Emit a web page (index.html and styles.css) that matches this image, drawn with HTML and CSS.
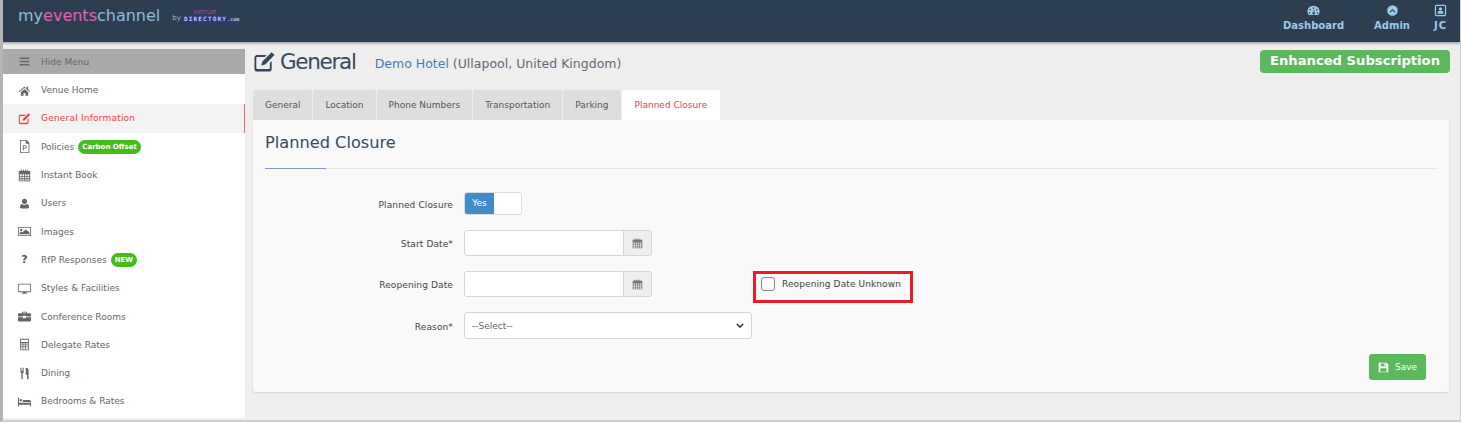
FILE: index.html
```html
<!DOCTYPE html>
<html>
  <head>
    <title>Planned Closure</title>
    <link rel="stylesheet" href="styles.css">
    <meta charset="utf-8">
  </head>
  <body>
    <div id="header">
      <div class="logo">
        <span class="logo-main">my<b>events</b>channel</span>
        <span class="logo-by">by</span>
        <span class="logo-vd"><span class="logo-venue">venue</span><span class="logo-dir">DIRECTORY<small>.com</small></span></span>
      </div>
      <div class="top-nav">
        <a class="top-link">
          <svg class="top-icon" viewBox="0 0 16 16"><path fill-rule="evenodd" d="M8 2a7.5 7 0 0 0-7.5 7c0 1.800.6 3.300 1.500 4.500h12c.9-1.200 1.500-2.700 1.500-4.500A7.500 7 0 0 0 8 2zM4 6a1 1 0 1 1 0 2 1 1 0 0 1 0-2zm4-2a1 1 0 1 1 0 2 1 1 0 0 1 0-2zm4 2a1 1 0 1 1 0 2 1 1 0 0 1 0-2zM3 10a1 1 0 1 1 0 2 1 1 0 0 1 0-2zm10 0a1 1 0 1 1 0 2 1 1 0 0 1 0-2zM9.500 6l-.5 4.200a1.500 1.500 0 1 1-1.500-.1z"/></svg>
          Dashboard
        </a>
        <a class="top-link">
          <svg class="top-icon" viewBox="0 0 16 16"><path fill-rule="evenodd" d="M8 1.500a6.500 6.500 0 1 0 0 13 6.500 6.500 0 0 0 0-13zM8 6l3.500 3.500-1 1L8 8 5.500 10.500l-1-1z"/></svg>
          Admin
        </a>
        <a class="top-link">
          <svg class="top-icon" viewBox="0 0 16 16"><path fill-rule="evenodd" d="M3 1h10a2 2 0 0 1 2 2v10a2 2 0 0 1-2 2H3a2 2 0 0 1-2-2V3a2 2 0 0 1 2-2zm0 1.500a.5.5 0 0 0-.5.5v10a.5.5 0 0 0 .5.5h10a.5.5 0 0 0 .5-.5V3a.5.5 0 0 0-.5-.5zM8 4a2 2 0 1 1 0 4 2 2 0 0 1 0-4zM4.500 12V10c0-1 1-1.500 2-1.500h3c1 0 2 .5 2 1.500v2z"/></svg>
          JC
        </a>
      </div>
    </div>

    <div id="content-container">
      <div id="sidebar">
        <div class="hide-menu">
          <svg class="nav-icon" viewBox="0 0 16 16"><path d="M2 3h12v2H2zM2 7h12v2H2zM2 11h12v2H2z"/></svg>
          Hide Menu
        </div>
        <a class="nav-item">
          <svg class="nav-icon" viewBox="0 0 16 16"><path d="M8 3 1 9l.7.8L8 4.500l6.300 5.300.7-.8-2.500-2.100V3.500h-2v2.500zM3.500 10v4.500h3.200V11h2.600v3.500h3.200V10L8 6z"/></svg>
          Venue Home
        </a>
        <a class="nav-item active">
          <svg class="nav-icon" viewBox="0 0 16 16"><path d="M2.500 3.500h7l-1.300 1.300H3a.7.7 0 0 0-.7.7v7a.7.7 0 0 0 .7.7h8a.7.7 0 0 0 .7-.7V9l1.300-1.300V13a2 2 0 0 1-2 2H3a2 2 0 0 1-2-2V5.500a2 2 0 0 1 1.500-2zM13 1.500l2 2-6.500 6.500-2.800.8.800-2.800z"/></svg>
          General Information
        </a>
        <a class="nav-item">
          <svg class="nav-icon" viewBox="0 0 16 16"><path fill-rule="evenodd" d="M2.500 0h8l3.500 3.500V16H2.500zm1 1v14h9.500V4.500H9.500V1zM6 6.500h2.700a2 2 0 0 1 0 4H7V13H6zM7 7.500v2h1.700a1 1 0 0 0 0-2z"/></svg>
          Policies
          <span class="pill">Carbon Offset</span>
        </a>
        <a class="nav-item">
          <svg class="nav-icon" viewBox="0 0 16 16"><path fill-rule="evenodd" d="M3.500 1h1.500v1.500h1V1h1.500v1.500h1V1h1.500v1.500h1V1h1v1.500H15V15H1V2.500h2.500zM2.200 6.500v2h2.300v-2zm3.300 0v2h2v-2zm3 0v2h2v-2zm3 0v2h2.300v-2zm-9.300 3v2h2.300v-2zm3.300 0v2h2v-2zm3 0v2h2v-2zm3 0v2h2.300v-2zm-9.300 3V14h2.300v-1.500zm3.300 0V14h2v-1.500zm3 0V14h2v-1.500zm3 0V14h2.300v-1.500z"/></svg>
          Instant Book
        </a>
        <a class="nav-item">
          <svg class="nav-icon" viewBox="0 0 16 16"><path d="M8 2a3.200 3.200 0 0 1 3.200 3.300c0 1.800-1.400 3.500-3.200 3.500S4.800 7.100 4.800 5.300A3.200 3.200 0 0 1 8 2zM5 8.500c.8.700 1.800 1.200 3 1.200s2.200-.5 3-1.200c1.500.2 2.500 1.500 2.500 3.500v1c0 .8-.6 1-1.500 1H4c-.9 0-1.500-.2-1.500-1v-1c0-2 1-3.300 2.500-3.500z"/></svg>
          Users
        </a>
        <a class="nav-item">
          <svg class="nav-icon" viewBox="0 0 16 16"><path fill-rule="evenodd" d="M0 2.500h16v11H0zm1 1v9h14v-9zM4 4.500a1.500 1.500 0 1 1 0 3 1.500 1.500 0 0 1 0-3zM2 11.500V9.500l2-1.500 1.500 1 4-3.500 4.500 3.500v2.500z"/></svg>
          Images
        </a>
        <a class="nav-item">
          <span class="nav-icon nav-glyph">?</span>
          RfP Responses
          <span class="pill">NEW</span>
        </a>
        <a class="nav-item">
          <svg class="nav-icon" viewBox="0 0 16 16"><path fill-rule="evenodd" d="M1.500 2h13A1.500 1.500 0 0 1 16 3.500v7.500a1.500 1.500 0 0 1-1.500 1.500H10v1.200h1.500v.8h-7v-.8H6v-1.200H1.500A1.500 1.500 0 0 1 0 11V3.500A1.500 1.500 0 0 1 1.500 2zm0 1a.5.5 0 0 0-.5.500V11a.5.5 0 0 0 .5.5h13a.5.5 0 0 0 .5-.5V3.500a.5.5 0 0 0-.5-.5z"/></svg>
          Styles &amp; Facilities
        </a>
        <a class="nav-item">
          <svg class="nav-icon" viewBox="0 0 16 16"><path d="M5 4V2.500C5 2 5.400 2 6 2h4c.6 0 1 0 1 .5V4h3.500c.8 0 1.500.6 1.500 1.500V8H10V7H6v1H0V5.500C0 4.600.7 4 1.500 4zm1 0h4V3H6zM0 9h6v1h4V9h6v3.500c0 .9-.7 1.500-1.500 1.500h-13C.7 14 0 13.400 0 12.500z"/></svg>
          Conference Rooms
        </a>
        <a class="nav-item">
          <svg class="nav-icon" viewBox="0 0 16 16"><path fill-rule="evenodd" d="M2.500 1h11v14h-11zm1 1v3h9V2zm0 4.500V8h2V6.500zm3 0V8h2V6.500zm3 0V8h3V6.500zm-6 2.500v1.500h2V9zm3 0v1.500h2V9zm3 0v1.500h3V9zm-6 2.500V14h2v-2.500zm3 0V14h2v-2.500zm3 0V14h3v-2.500z"/></svg>
          Delegate Rates
        </a>
        <a class="nav-item">
          <svg class="nav-icon" viewBox="0 0 16 16"><path d="M3 1h.8v4h.7V1h1v4h.7V1H7v5.500L5.800 8v7H4.200V8L3 6.500zM9.500 1C11.500 1 13 2 13 4v11h-1.800V9.500H9.500z"/></svg>
          Dining
        </a>
        <a class="nav-item">
          <svg class="nav-icon" viewBox="0 0 16 16"><path d="M0 3h1.200v6.500H16V14h-1.200v-2H1.200v2H0zM2 6.500a1.500 1.500 0 1 1 3 0 1.500 1.500 0 0 1-3 0zM6 6h8c1 0 2 .7 2 2v.7H6z"/></svg>
          Bedrooms &amp; Rates
        </a>
      </div>

      <div id="main">
        <div class="page-head">
          <svg class="head-icon" viewBox="0 0 16 16"><path d="M2.500 3.500h7l-1.300 1.300H3a.7.7 0 0 0-.7.7v7a.7.7 0 0 0 .7.7h8a.7.7 0 0 0 .7-.7V9l1.300-1.300V13a2 2 0 0 1-2 2H3a2 2 0 0 1-2-2V5.500a2 2 0 0 1 1.500-2zM13 1.500l2 2-6.500 6.500-2.800.8.800-2.800z"/></svg>
          <h1>General</h1>
          <div class="venue"><a>Demo Hotel</a> (Ullapool, United Kingdom)</div>
          <div class="sub-badge">Enhanced Subscription</div>
        </div>

        <div class="tabs">
          <a class="tab">General</a>
          <a class="tab">Location</a>
          <a class="tab">Phone Numbers</a>
          <a class="tab">Transportation</a>
          <a class="tab">Parking</a>
          <a class="tab tab-active">Planned Closure</a>
        </div>

        <div class="panel">
          <h2>Planned Closure</h2>
          <div class="panel-rule"></div>

          <div class="form-row row-toggle">
            <label>Planned Closure</label>
            <div class="toggle"><span class="toggle-on">Yes</span></div>
          </div>
          <div class="form-row">
            <label>Start Date*</label>
            <div class="date-group">
              <input type="text">
              <span class="addon"><svg class="cal-icon" viewBox="0 0 16 16"><path fill-rule="evenodd" d="M3.500 1h1.500v1.500h1V1h1.500v1.500h1V1h1.500v1.500h1V1h1v1.500H15V15H1V2.500h2.500zM2.200 6.500v2h2.300v-2zm3.300 0v2h2v-2zm3 0v2h2v-2zm3 0v2h2.300v-2zm-9.300 3v2h2.300v-2zm3.300 0v2h2v-2zm3 0v2h2v-2zm3 0v2h2.300v-2zm-9.300 3V14h2.300v-1.500zm3.300 0V14h2v-1.500zm3 0V14h2v-1.500zm3 0V14h2.300v-1.500z"/></svg></span>
            </div>
          </div>
          <div class="form-row">
            <label>Reopening Date</label>
            <div class="date-group">
              <input type="text">
              <span class="addon"><svg class="cal-icon" viewBox="0 0 16 16"><path fill-rule="evenodd" d="M3.500 1h1.500v1.500h1V1h1.500v1.500h1V1h1.500v1.500h1V1h1v1.500H15V15H1V2.500h2.500zM2.200 6.500v2h2.300v-2zm3.300 0v2h2v-2zm3 0v2h2v-2zm3 0v2h2.300v-2zm-9.300 3v2h2.300v-2zm3.300 0v2h2v-2zm3 0v2h2v-2zm3 0v2h2.300v-2zm-9.300 3V14h2.300v-1.500zm3.300 0V14h2v-1.500zm3 0V14h2v-1.500zm3 0V14h2.300v-1.500z"/></svg></span>
            </div>
            <div class="unknown-box">
              <span class="check"></span>
              Reopening Date Unknown
            </div>
          </div>
          <div class="form-row row-select">
            <label>Reason*</label>
            <div class="select-box">
              --Select--
              <svg class="caret" viewBox="0 0 10 6"><path d="M1 1l4 4 4-4" fill="none" stroke="#333" stroke-width="1.800"/></svg>
            </div>
          </div>
          <div class="panel-foot">
            <a class="btn-save">
              <svg class="save-icon" viewBox="0 0 16 16"><path fill-rule="evenodd" d="M1 1h11.500L15 3.500V15H1zm3 1.200v4h7v-4zm5 .6h1.200v2.600H9zM3.500 9v5h9V9z"/></svg>
              Save
            </a>
          </div>
        </div>
      </div>
    </div>
  </body>
</html>
```

FILE: styles.css
```css
* {
  box-sizing: border-box;
}
html, body {
  height: 100%;
}
body {
  margin: 0;
  overflow: hidden;
  background-color: #eeeeee;
  border-left: 3px solid #b4b4b4;
  border-right: 1px solid #cfcfcf;
  border-bottom: 2px solid #cfcfcf;
  font-family: "DejaVu Sans", sans-serif;
  font-size: 9px;
  color: #555;
}
a {
  text-decoration: none;
}

/* header */
#header {
  height: 42px;
  margin-left: -3px;
  margin-right: -1px;
  padding: 0 14px 0 18px;
  display: flex;
  justify-content: space-between;
  background-color: #2c3e50;
  box-shadow: 0 1px 3px rgba(0,0,0,.4);
}
.logo {
  display: flex;
  align-items: center;
  height: 30px;
  color: #8fbbd6;
}
.logo-main {
  font-size: 16px;
}
.logo-main b {
  font-weight: normal;
  color: #e85fb5;
}
.logo-by {
  margin-left: 12px;
  font-size: 7px;
  margin-top: 5px;
}
.logo-vd {
  margin-left: 3px;
  display: flex;
  flex-direction: column;
  align-items: center;
  line-height: 7px;
  margin-top: 1px;
}
.logo-venue {
  font-size: 7.5px;
  color: #a0489c;
  margin-right: 14px;
}
.logo-dir {
  font-family: "DejaVu Sans Mono", monospace;
  font-weight: bold;
  font-size: 6px;
  color: #c9cbe8;
  background-color: #2a3a78;
  letter-spacing: 1.2px;
}
.logo-dir small {
  font-size: 5px;
  letter-spacing: 0;
  background-color: #2c3e50;
}
.top-nav {
  display: flex;
  gap: 30px;
  padding-top: 4px;
}
.top-link {
  display: flex;
  flex-direction: column;
  align-items: center;
  font-size: 10px;
  line-height: 13px;
  font-weight: bold;
  color: #9ccbe8;
}
.top-link:last-child {
  margin-left: -6px;
  letter-spacing: 1px;
}
.top-icon {
  width: 13px;
  height: 13px;
  margin-bottom: 2px;
  fill: #9ccbe8;
}

/* page */
#content-container {
  display: flex;
  height: 378px;
}
#sidebar {
  width: 242px;
  margin-top: 7px;
  height: 369px;
  background-color: #fff;
  overflow: hidden;
  flex-shrink: 0;
}
.hide-menu {
  height: 25px;
  display: flex;
  align-items: center;
  padding-left: 15px;
  gap: 10px;
  background-color: #aaaaaa;
  color: #666;
}
.nav-item {
  height: 28.3px;
  display: flex;
  align-items: center;
  padding-left: 15px;
  gap: 10px;
  color: #666;
}
.hide-menu + .nav-item {
  margin-top: 2px;
}
.active {
  background-color: #f3f3f3;
  border-right: 1px solid #e9686c;
  color: #e8434a;
  letter-spacing: .2px;
}
.nav-icon {
  width: 13px;
  height: 13px;
  flex-shrink: 0;
  fill: #666;
}
.active .nav-icon {
  fill: #e8434a;
}
.nav-glyph {
  font-weight: bold;
  font-size: 11px;
  line-height: 13px;
  text-align: center;
  color: #555;
}
.pill {
  margin-left: -6px;
  padding: 0 4px;
  height: 14px;
  line-height: 14px;
  border-radius: 7px;
  background-color: #45bb1c;
  color: #fff;
  font-size: 7px;
  font-weight: bold;
}

#main {
  flex: 1;
  padding: 0 11px 0 8px;
  min-width: 0;
}
.page-head {
  height: 48px;
  display: flex;
  align-items: center;
  padding-bottom: 10px;
}
.head-icon {
  width: 23px;
  height: 23px;
  fill: #34495e;
  margin-right: 4px;
}
h1 {
  margin: 0;
  font-size: 21.5px;
  letter-spacing: -1.3px;
  font-weight: normal;
  color: #34495e;
}
.venue {
  margin-left: 19px;
  margin-top: 4px;
  font-size: 12.5px;
  color: #667;
}
.venue a {
  color: #3d7fb8;
}
.sub-badge {
  margin-left: auto;
  margin-right: -1px;
  margin-top: 1px;
  padding: 0 10px;
  height: 23px;
  line-height: 22px;
  border-radius: 4px;
  background-color: #5cb85c;
  color: #fff;
  font-size: 13.15px;
  font-weight: bold;
}
.tabs {
  display: flex;
  gap: 1px;
  height: 30px;
}
.tab {
  padding: 0 12px;
  line-height: 30px;
  border-radius: 3px 3px 0 0;
  background-color: #dedede;
  color: #555;
}
.tab-active {
  padding: 0 13px;
  background-color: #fff;
  color: #e8434a;
}
.panel {
  background-color: #f9f9f9;
  border-radius: 0 3px 3px 3px;
  height: 272px;
  padding: 12px 12px 0;
  box-shadow: 0 1px 2px rgba(0,0,0,.12);
}
h2 {
  margin: 0;
  font-size: 16.2px;
  line-height: 22px;
  font-weight: normal;
  color: #34495e;
}
.panel-rule {
  margin-top: 14px;
  height: 1px;
  background: linear-gradient(to right, #7a9cc6 61px, #e6e6e6 61px);
}
.form-row {
  display: flex;
  align-items: center;
  margin-top: 15px;
  height: 26px;
}
.row-toggle {
  margin-top: 23px;
  height: 23px;
}
.row-select {
  height: 27px;
}
.form-row label {
  width: 188px;
  padding-top: 2px;
  text-align: right;
  letter-spacing: .12px;
  color: #444;
  margin-right: 11px;
}
.toggle {
  width: 58px;
  height: 23px;
  border: 1px solid #ddd;
  border-radius: 3px;
  background-color: #fff;
  overflow: hidden;
}
.toggle-on {
  display: block;
  width: 29px;
  height: 21px;
  line-height: 21px;
  text-align: center;
  background-color: #428bca;
  color: #fff;
  font-size: 9px;
}
.date-group {
  display: flex;
  width: 188px;
  height: 26px;
}
.date-group input {
  flex: 1;
  min-width: 0;
  border: 1px solid #d5d5d5;
  border-radius: 3px 0 0 3px;
  background-color: #fff;
}
.addon {
  width: 29px;
  display: flex;
  align-items: center;
  justify-content: center;
  margin-left: -1px;
  border: 1px solid #d5d5d5;
  border-radius: 0 3px 3px 0;
  background-color: #eeeeee;
}
.cal-icon {
  width: 11px;
  height: 11px;
  fill: #777;
}
.unknown-box {
  display: flex;
  align-items: flex-start;
  gap: 7px;
  width: 160px;
  height: 32px;
  margin-left: 101px;
  margin-top: 5px;
  padding: 3px 0 0 5px;
  border: 3px solid #ed1c24;
  line-height: 14px;
  letter-spacing: .1px;
  color: #444;
}
.check {
  width: 14px;
  height: 14px;
  border: 1px solid #888;
  border-radius: 3px;
  background-color: #fff;
}
.select-box {
  display: flex;
  align-items: center;
  justify-content: space-between;
  width: 288px;
  height: 27px;
  padding: 0 7px;
  border: 1px solid #d5d5d5;
  border-radius: 3px;
  background-color: #fff;
  color: #666;
}
.caret {
  width: 8px;
  height: 5px;
}
.panel-foot {
  display: flex;
  justify-content: flex-end;
  margin-top: 15px;
  padding-right: 11px;
}
.btn-save {
  display: flex;
  align-items: center;
  justify-content: center;
  gap: 6px;
  width: 57px;
  height: 26px;
  border-radius: 3px;
  background-color: #5cb85c;
  color: #fff;
}
.save-icon {
  width: 11px;
  height: 11px;
  fill: #fff;
}
```
